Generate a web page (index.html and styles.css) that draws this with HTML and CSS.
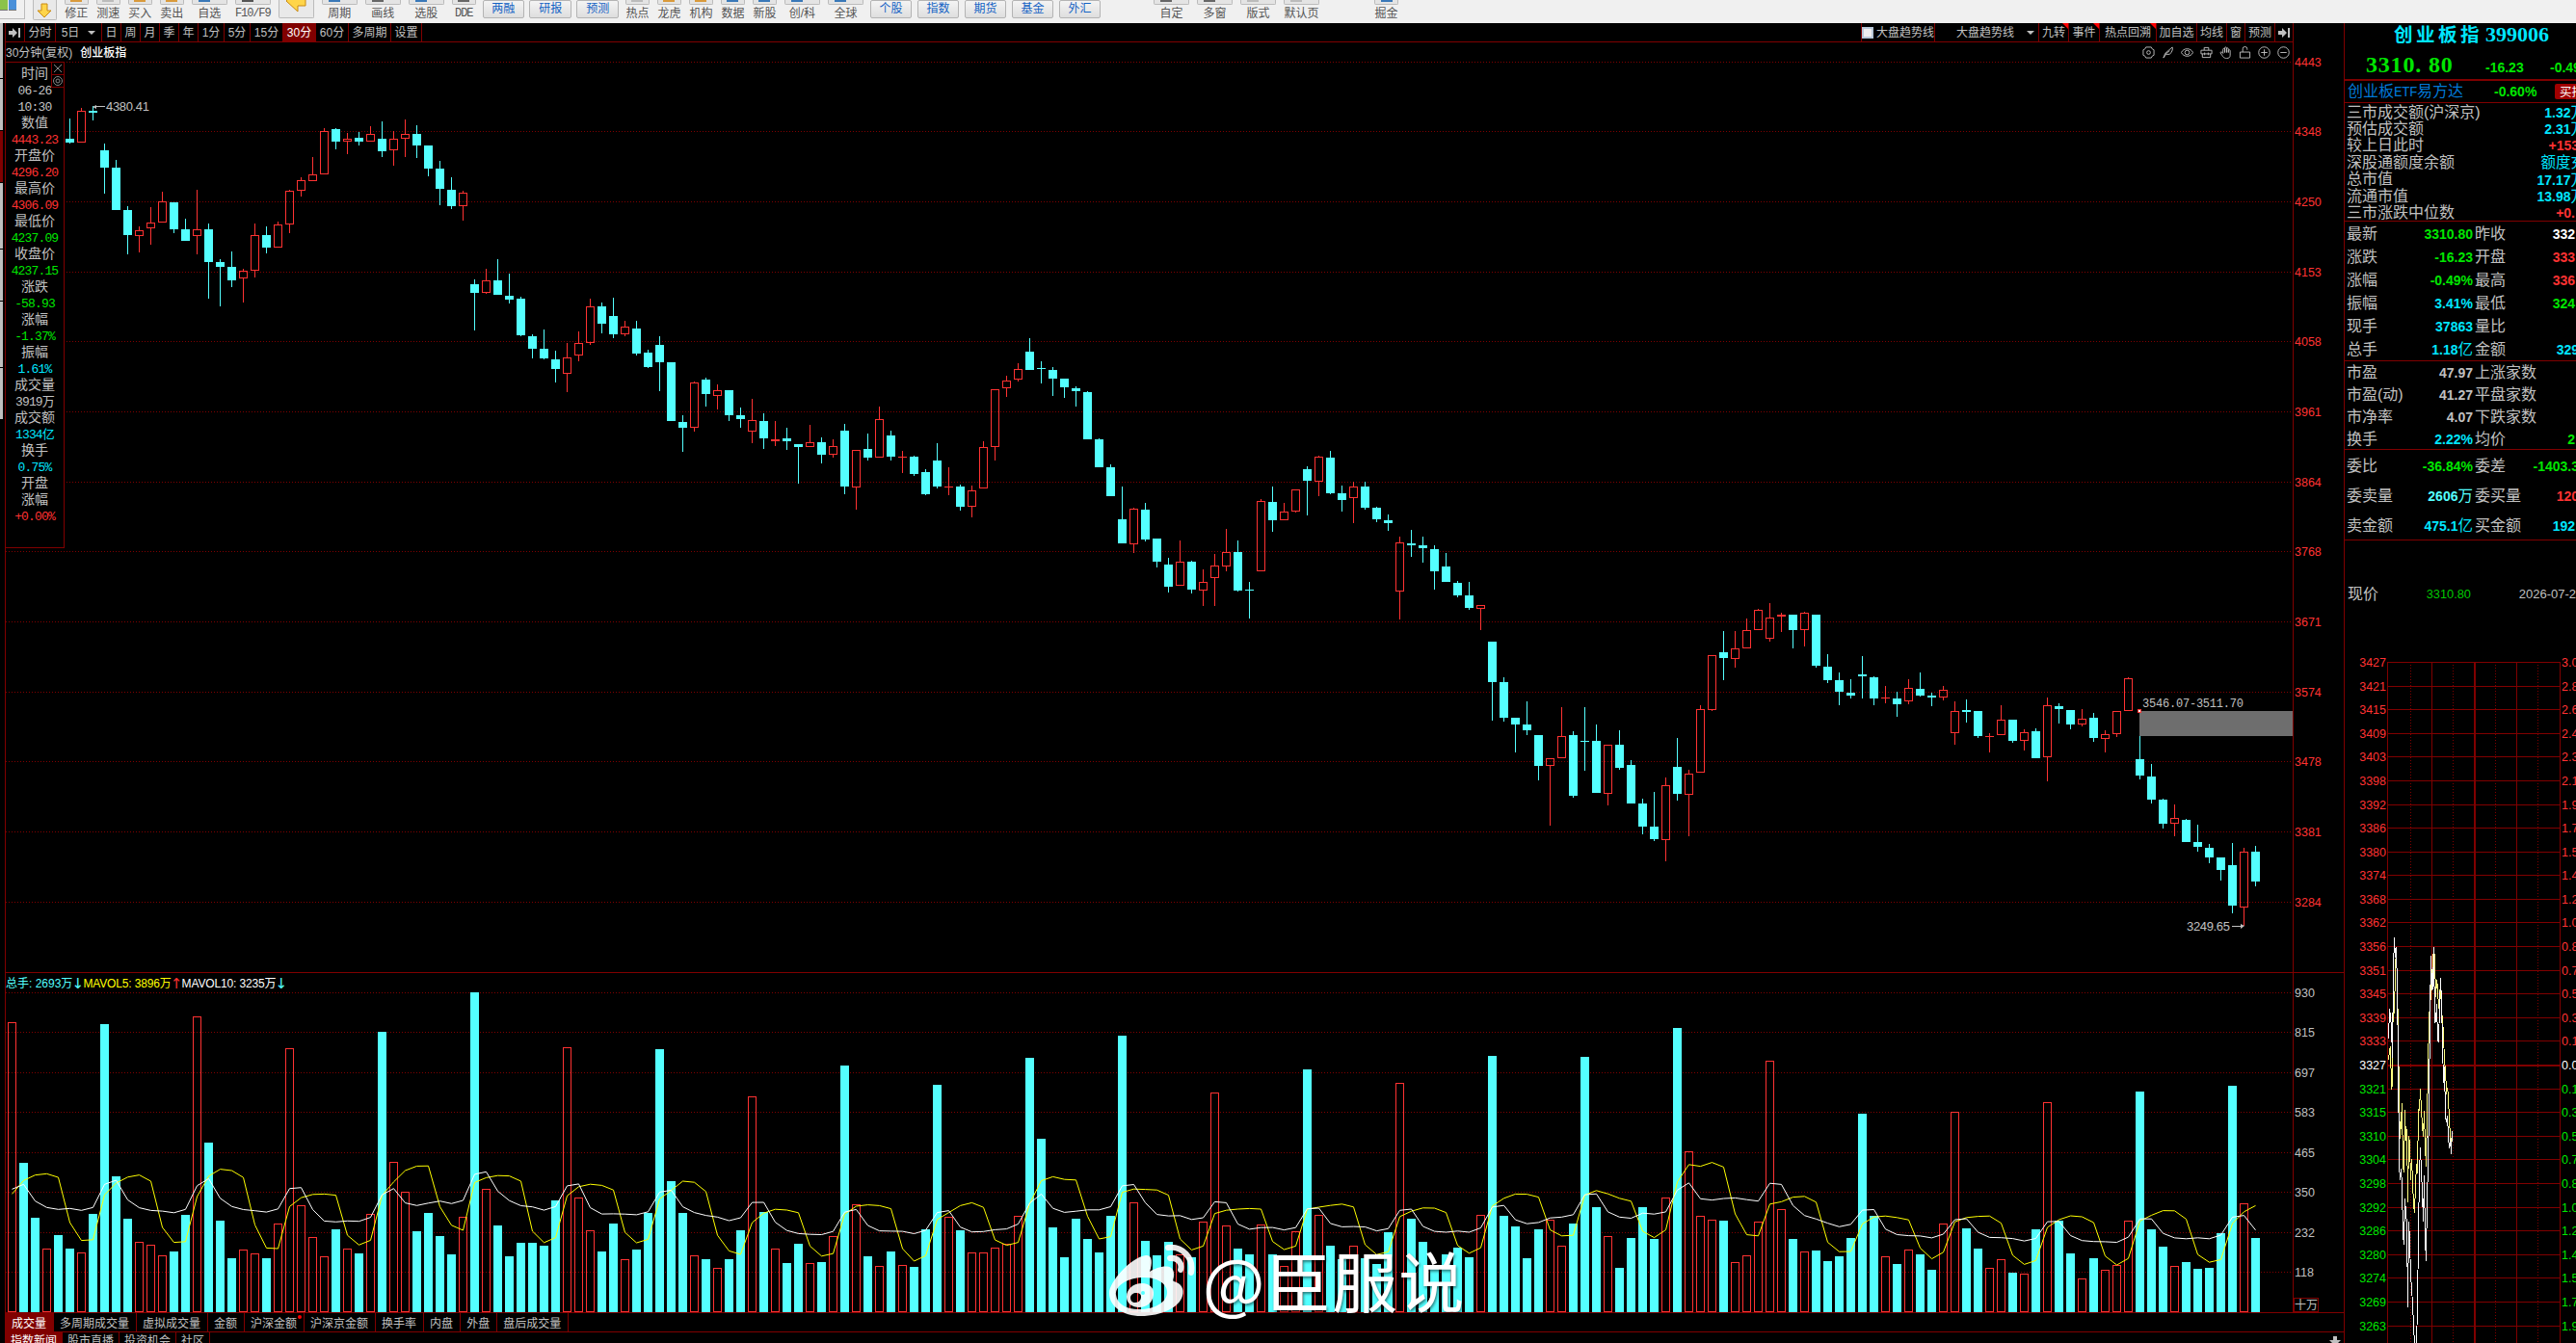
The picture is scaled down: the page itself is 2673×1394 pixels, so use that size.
FILE: index.html
```html
<!DOCTYPE html>
<html lang="zh-CN">
  <head>
    <meta charset="UTF-8" />
    <title>创业板指 399006</title>
    <link rel="stylesheet" href="styles.css">
  </head>
  <body>
    <header class="toolbar">
      <div class="tool win"><i></i><i></i></div>
      <div class="tool boxed down">
        <svg width="16" height="16" viewBox="0 0 16 16"><path d="M5 1h6v7h4l-7 7-7-7h4z" fill="#ffd54a" stroke="#c98a12"/></svg>
      </div>
      <div class="tool orange">修正</div>
      <div class="tool gray">测速</div>
      <div class="tool orange">买入</div>
      <div class="tool orange">卖出</div>
      <div class="tool wide blue">自选</div>
      <div class="tool wide mono">F10/F9</div>
      <div class="tool wide boxed back">
        <svg width="22" height="14" viewBox="0 0 22 14"><path d="M1 1l8-8v5h12v8H13v6z" fill="#ffd54a" stroke="#c98a12"/></svg>
      </div>
      <div class="tool wide blue">周期</div>
      <div class="tool wide dark">画线</div>
      <div class="tool wide blue">选股</div>
      <div class="tool mono dark">DDE</div>
      <div class="buttons">
        <button>两融</button><button>研报</button><button>预测</button>
      </div>
      <div class="tool gray">热点</div>
      <div class="tool orange">龙虎</div>
      <div class="tool orange">机构</div>
      <div class="tool blue">数据</div>
      <div class="tool blue">新股</div>
      <div class="tool wide blue">创/科</div>
      <div class="tool wide blue">全球</div>
      <div class="buttons markets">
        <button>个股</button><button>指数</button><button>期货</button><button>基金</button><button>外汇</button>
      </div>
      <div class="tool wide dark layout-first">自定</div>
      <div class="tool wide dark">多窗</div>
      <div class="tool wide gray">版式</div>
      <div class="tool wide gray">默认页</div>
      <div class="tool blue last">掘金</div>
    </header>

    <div class="desk">
      <div class="gutter"><i></i><i></i><i class="on"></i><i></i><i></i><i></i><i></i></div>

      <main class="workspace">
        <div class="upper">
          <section class="charts">
            <nav class="periods">
              <a class="p-arrow"><svg width="13" height="12" viewBox="0 0 13 12"><path d="M0 4h4V1l5 5-5 5V8H0zM10 1h2v10h-2z" fill="#c0c0c0"/></svg></a>
              <a class="p-two">分时</a>
              <a class="p-drop">5日 <b class="caret"></b></a>
              <a>日</a><a>周</a><a>月</a><a>季</a><a>年</a>
              <a class="p-min">1分</a><a class="p-min">5分</a>
              <a class="p-long">15分</a><a class="p-long active">30分</a><a class="p-long">60分</a>
              <a class="p-multi">多周期</a><a class="p-two">设置</a>
              <span class="spacer"></span>
              <a class="trend-check"><i class="check"></i>大盘趋势线</a>
              <a class="trend">大盘趋势线 <b class="caret"></b></a>
              <a class="r31 flag">九转</a>
              <a class="r32 flag">事件</a>
              <a class="r59 flag">热点回溯</a>
              <a class="r42">加自选</a>
              <a class="r31">均线</a>
              <a class="r19">窗</a>
              <a class="r31">预测</a>
              <a class="r18"><svg width="13" height="12" viewBox="0 0 13 12"><path d="M0 4h4V1l5 5-5 5V8H0zM10 1h2v10h-2z" fill="#c0c0c0"/></svg></a>
            </nav>

            <div class="titlebar">
              <span>30分钟(复权)</span><strong>创业板指</strong>
              <div class="draw-tools">
                <svg viewBox="0 0 14 14"><path d="M4 1h6l1 2 2 1v6l-2 1-1 2H4l-1-2-2-1V4l2-1z"/><circle cx="7" cy="7" r="2"/></svg>
                <svg viewBox="0 0 14 14"><path d="M2 13l2-5 8-7c1 3-1 6-3 8H5zM4 9l5-4"/></svg>
                <svg viewBox="0 0 14 14"><path d="M.5 7C3 1.500 11 1.500 13.500 7 11 12.500 3 12.500.5 7z"/><circle cx="7" cy="7" r="2.500"/></svg>
                <svg viewBox="0 0 14 14"><path d="M1 4.500h12v4H1zM2.500 8.500v4h9v-4M4.500 4.500v-3h5v3M5 7v3M9 7v3"/></svg>
                <svg viewBox="0 0 14 14"><path d="M4 8V3.500a1 1 0 012 0V7 2a1 1 0 012 0v5-4a1 1 0 012 0v4-2a1 1 0 012 0v5c0 2-1 3.500-4 3.500S4 12 1 7c1-1 2-.5 3 1z"/></svg>
                <svg viewBox="0 0 14 14"><path d="M1.500 6.500h11v6.500h-11zM4.500 6.500V3a2.500 2.500 0 015 0v1"/></svg>
                <svg viewBox="0 0 14 14"><circle cx="7" cy="7" r="6.200"/><path d="M3.500 7h7M7 3.500v7"/></svg>
                <svg viewBox="0 0 14 14"><circle cx="7" cy="7" r="6.200"/><path d="M3.500 7h7"/></svg>
              </div>
            </div>

            <div class="kplot">
              <svg id="kline" width="2373" height="945" viewBox="6 64 2373 945"></svg>
              <aside class="info">
                <div class="info-tools">
                  <svg viewBox="0 0 12 12"><path d="M2 2l8 8M10 2l-8 8"/></svg>
                  <svg viewBox="0 0 12 12"><circle cx="6" cy="6" r="4.500"/><circle cx="6" cy="6" r="2"/></svg>
                </div>
                <p>时间</p><p class="num">06-26</p><p class="num">10:30</p>
                <p>数值</p><p class="up">4443.23</p>
                <p>开盘价</p><p class="up">4296.20</p>
                <p>最高价</p><p class="up">4306.09</p>
                <p>最低价</p><p class="down">4237.09</p>
                <p>收盘价</p><p class="down">4237.15</p>
                <p>涨跌</p><p class="down">-58.93</p>
                <p>涨幅</p><p class="down">-1.37%</p>
                <p>振幅</p><p class="cyan">1.61%</p>
                <p>成交量</p><p class="num">3919万</p>
                <p>成交额</p><p class="cyan">1334亿</p>
                <p>换手</p><p class="cyan">0.75%</p>
                <p>开盘</p><p>涨幅</p><p class="up">+0.00%</p>
              </aside>
            </div>

            <div class="legend">
              <span class="vol">总手: 2693万</span><i class="vol">↓</i>
              <span class="ma5">MAVOL5: 3896万</span><i class="up">↑</i>
              <span class="ma10">MAVOL10: 3235万</span><i class="vol">↓</i>
            </div>
            <svg id="volume" width="2373" height="334" viewBox="6 1028 2373 334"></svg>
          </section>

          <section class="axes">
            <svg id="kaxis" width="52" height="985" viewBox="2380 24 52 985"></svg>
            <div class="vaxis">
              <svg id="vaxis" width="52" height="337" viewBox="2380 1010 52 337"></svg>
              <span class="unit">十万</span>
            </div>
          </section>
        </div>

        <nav class="tabs">
          <a class="active">成交量</a><a>多周期成交量</a><a>虚拟成交量</a><a>金额</a><a class="dot">沪深金额</a><a>沪深京金额</a><a>换手率</a><a>内盘</a><a>外盘</a><a>盘后成交量</a>
        </nav>
        <nav class="tabs news">
          <a class="active">指数新闻</a><a>股市直播</a><a>投资机会</a><a>社区</a>
          <svg width="12" height="12" viewBox="0 0 12 12"><path d="M4 0h4v4h4l-6 6-6-6h4z" fill="#c0c0c0"/></svg>
        </nav>
      </main>

      <aside class="quote">
        <h1>创业板指<span>399006</span></h1>
        <div class="price down"><b>3310<i>.</i>80</b><em>-16.23</em><em class="pct">-0.49</em></div>
        <div class="etf"><a>创业板<span>ETF</span>易方达</a><em class="down">-0.60%</em><button>买指</button></div>

        <dl class="market">
          <dt>三市成交额(沪深京)</dt><dd class="cyan over">1.32<u>万</u></dd>
          <dt>预估成交额</dt><dd class="cyan over">2.31<u>万</u></dd>
          <dt>较上日此时</dt><dd class="up nudge">+153</dd>
          <dt>深股通额度余额</dt><dd class="cyan over"><u>额度充</u></dd>
          <dt>总市值</dt><dd class="cyan over">17.17<u>万</u></dd>
          <dt>流通市值</dt><dd class="cyan over">13.98<u>万</u></dd>
          <dt>三市涨跌中位数</dt><dd class="up">+0.</dd>
        </dl>

        <dl class="pairs">
          <dt>最新</dt><dd class="down">3310.80</dd><dt>昨收</dt><dd class="white">332</dd>
          <dt>涨跌</dt><dd class="down">-16.23</dd><dt>开盘</dt><dd class="up">333</dd>
          <dt>涨幅</dt><dd class="down">-0.49%</dd><dt>最高</dt><dd class="up">336</dd>
          <dt>振幅</dt><dd class="cyan">3.41%</dd><dt>最低</dt><dd class="down">324</dd>
          <dt>现手</dt><dd class="cyan">37863</dd><dt>量比</dt><dd></dd>
          <dt>总手</dt><dd class="cyan">1.18<u>亿</u></dd><dt>金额</dt><dd class="cyan nudge">329</dd>
        </dl>

        <dl class="pairs ratios">
          <dt>市盈</dt><dd>47.97</dd><dt>上涨家数</dt><dd></dd>
          <dt>市盈(动)</dt><dd>41.27</dd><dt>平盘家数</dt><dd></dd>
          <dt>市净率</dt><dd>4.07</dd><dt>下跌家数</dt><dd></dd>
          <dt>换手</dt><dd class="cyan">2.22%</dd><dt>均价</dt><dd class="down">2</dd>
        </dl>

        <dl class="pairs orders">
          <dt>委比</dt><dd class="down">-36.84%</dd><dt>委差</dt><dd class="down nudge">-1403.3</dd>
          <dt>委卖量</dt><dd class="aqua">2606<u>万</u></dd><dt>委买量</dt><dd class="up nudge">120</dd>
          <dt>卖金额</dt><dd class="cyan">475.1<u>亿</u></dd><dt>买金额</dt><dd class="cyan">192</dd>
        </dl>

        <div class="now"><span>现价</span><em>3310.80</em><time>2026-07-2</time></div>

        <svg id="intraday" width="240" height="728" viewBox="2433 666 240 728"></svg>
      </aside>
    </div>

    <div class="watermark">
      <svg width="92" height="76" viewBox="0 0 92 76">
        <path fill-rule="evenodd" d="M0 51C0 40 22 14 38 12c7-1 7 8 4 17 9-6 24-9 25 1 1 5-2 8 0 9 8 2 11 8 9 15C73 66 54 75 33 75 14 75 0 65 0 51zM7 53c1 10 12 16 27 15 16-1 27-9 26-19-1-9-12-15-27-14C18 36 6 44 7 53z"/>
        <path fill-rule="evenodd" d="M18 55c0-8 7-14 16-14 8 0 13 5 12 12-1 8-7 13-15 13-7 0-13-4-13-11zM22 56c0 3 2 5 5 5 4 0 6-3 6-6s-2-4-5-4-6 2-6 5zM33 51a2 2 0 104 0 2 2 0 10-4 0z"/>
        <path class="wave" d="M61 4c15-2 27 11 24 26M63 15c8-1 13 5 11 12"/>
      </svg>
      <span>@臣服说</span>
    </div>

    <script src="script.js"></script>
  </body>
</html>
```

FILE: styles.css
```css
* {
  box-sizing: border-box;
}

body {
  margin: 0;
  width: 2673px;
  height: 1394px;
  overflow: hidden;
  position: relative;
  display: flex;
  flex-direction: column;
  background: #000;
  color: #c0c0c0;
  font: 12px/1 "Liberation Sans", "Noto Sans CJK SC", sans-serif;
  white-space: nowrap;
}

svg {
  display: block;
}

.up { color: #ff3232; }
.down { color: #00e600; }
.cyan { color: #00e6ff; }
.aqua { color: #54ffff; }
.white { color: #fff; }

/* top toolbar */
.toolbar {
  height: 24px;
  flex: none;
  display: flex;
  gap: 7.5px;
  background: #f0f0f0;
  color: #555;
}

.tool {
  position: relative;
  width: 25.5px;
  height: 20px;
  padding-top: 8px;
  display: flex;
  justify-content: center;
}

.tool.wide {
  width: 37.5px;
}

/* lower edge of the icon above each caption */
.tool::before {
  content: "";
  position: absolute;
  left: 0;
  right: 0;
  top: 0;
  height: 4px;
  border: 1px solid #bbb;
  border-top: 0;
  border-radius: 0 0 2px 2px;
  background: linear-gradient(currentColor, currentColor) center top / 12px 2px no-repeat #e4e4e4;
}

.tool.wide::before {
  background-position: 6px top;
}

.tool.orange::before { color: #d99a3c; }
.tool.gray::before { color: #bbb; }
.tool.blue::before { color: #3a78b8; }
.tool.dark::before { color: #666; }

.tool.mono {
  font: 12px/12px "Liberation Mono", monospace;
  letter-spacing: -1.1px;
}

.tool.win {
  width: 26px;
  padding: 0;
  justify-content: flex-start;
  gap: 1px;
  border: 1px solid #bbb;
  border-width: 0 1px 1px 0;
}

.tool.win::before,
.tool.boxed::before {
  display: none;
}

.tool.win i {
  width: 8px;
  height: 11px;
  background: #8bc34a;
  border-bottom: 1px solid #777;
}

.tool.win i + i {
  background: #4a90d9;
}

.tool.boxed {
  height: 21px;
  padding: 3px 0 0;
  border: 1px solid #bbb;
  border-top: 0;
  border-radius: 0 0 2px 2px;
  background: #e9e9e9;
}

.tool.back {
  height: 19px;
  padding: 0;
}

.buttons {
  display: flex;
  gap: 5.3px;
  margin: 0 -1px 0 -1px;
}

.buttons button {
  width: 43.7px;
  height: 19px;
  padding: 0 0 1px;
  border: 1px solid #b4b4b4;
  border-radius: 2px;
  background: linear-gradient(#f4f4f4, #dedede);
  color: #1463c4;
  font: inherit;
}

.layout-first { margin-left: 48px; }
.tool.last { margin-left: 49px; }

.desk {
  flex: 1;
  min-height: 0;
  display: flex;
}

/* strip of the docked sidebar */
.gutter {
  width: 5px;
  height: 411px;
  display: flex;
  flex-direction: column;
  gap: 1px;
}

.gutter i {
  width: 3px;
  height: 53px;
  background: #c0c0c0;
}

.gutter i:first-child { height: 57px; }
.gutter i:nth-child(4) { height: 68px; }
.gutter i:nth-child(6) { height: 68px; }
.gutter i.on { background: #800000; }

.workspace {
  width: 2428px;
  flex: none;
  border: 1px solid #800000;
  border-width: 0 1px;
}

.upper {
  display: flex;
  height: 1339px;
  border-bottom: 1px solid #800000;
}

.charts {
  width: 2374px;
  border-right: 1px solid #800000;
}

.periods {
  height: 20px;
  display: flex;
  border-bottom: 1px solid #800000;
}

.periods a {
  position: relative;
  width: 20px;
  padding-top: 1px;
  display: flex;
  align-items: center;
  justify-content: center;
  border-right: 1px solid #800000;
}

.periods .p-two { width: 32px; }
.periods .p-drop { width: 48px; gap: 9px; }
.periods .p-min { width: 27px; }
.periods .p-long { width: 34px; }
.periods .p-multi { width: 44px; }
.periods .active { background: #800000; color: #fff; }
.periods .spacer { flex: 1; border-right: 1px solid #800000; }
.periods .trend-check { width: 76px; gap: 3px; }
.periods .trend { width: 108px; gap: 13px; padding-left: 18px; }
.periods .r18 { width: 18px; border: 0; }
.periods .r19 { width: 19px; }
.periods .r31 { width: 31px; }
.periods .r32 { width: 32px; }
.periods .r59 { width: 59px; }
.periods .r42 { width: 42px; }

.flag::after {
  content: "";
  position: absolute;
  top: 0;
  right: 0;
  border-top: 6px solid #f00;
  border-left: 6px solid transparent;
}

.caret {
  border: 4px solid transparent;
  border-top-color: #c0c0c0;
  border-bottom: 0;
}

.check {
  width: 12px;
  height: 12px;
  border: 2px solid #b8c8d8;
  background: #eee;
}

.titlebar {
  height: 20px;
  padding-top: 1px;
  display: flex;
  align-items: center;
  gap: 8px;
}

.titlebar strong {
  color: #fff;
  font-weight: 500;
}

.draw-tools {
  display: flex;
  gap: 7px;
  margin: 0 3px 0 auto;
}

.draw-tools svg {
  width: 13px;
  height: 13px;
  fill: none;
  stroke: #c0c0c0;
}

.kplot {
  position: relative;
  height: 946px;
  border-bottom: 1px solid #800000;
}

/* floating cursor data box */
.info {
  position: absolute;
  left: -1px;
  top: 0;
  width: 62px;
  height: 505px;
  padding-top: 4px;
  border: 1px solid #800000;
  background: #000;
  text-align: center;
  font: 13px/17px "Liberation Mono", "Noto Sans CJK SC", monospace;
}

.info p {
  height: 17px;
  margin: 0;
  letter-spacing: -0.85px;
}

.info p:not([class]) {
  font-size: 14px;
  letter-spacing: 0;
}

.info-tools {
  position: absolute;
  top: -1px;
  right: -1px;
  width: 14px;
}

.info-tools svg {
  width: 14px;
  height: 14px;
  margin-bottom: -1px;
  border: 1px solid #800000;
  fill: none;
  stroke: #888;
}

.legend {
  height: 18px;
  display: flex;
  align-items: center;
  padding-top: 4px;
}

.legend i {
  width: 11px;
  font: 15px/12px "DejaVu Sans", sans-serif;
  display: flex;
  justify-content: center;
}

.legend .vol { color: #54ffff; }
.legend .ma5 { color: #ff0; letter-spacing: -0.15px; }
.legend .ma10 { color: #fff; letter-spacing: -0.15px; }

.axes {
  width: 52px;
}

.vaxis {
  border-top: 1px solid #800000;
}

.unit {
  display: block;
  width: 26px;
  height: 15px;
  border: 1px solid #800000;
  line-height: 14px;
  text-align: center;
}

.tabs {
  display: flex;
  height: 20px;
  border-bottom: 1px solid #800000;
}

.tabs a {
  position: relative;
  padding: 0 7px 0 6px;
  line-height: 22px;
  border-right: 1px solid #800000;
}

.tabs .active {
  background: #800000;
  color: #fff;
}

.tabs .dot::after {
  content: "";
  position: absolute;
  top: 2px;
  right: 2px;
  width: 4px;
  height: 4px;
  border-radius: 50%;
  background: #f00;
}

.tabs.news {
  height: 11px;
  overflow: hidden;
  border: 0;
}

.tabs.news a {
  padding: 0 5px;
  line-height: 18px;
}

.tabs.news svg {
  margin: 4px 3px 0 auto;
}

/* right quote panel */
.quote {
  flex: 1;
  overflow: hidden;
  font-size: 16px;
}

.quote h1 {
  height: 25px;
  margin: 0;
  padding-left: 51px;
  color: #00e6ff;
  font: bold 19.5px/24px "Liberation Serif", "Noto Sans CJK SC", serif;
  letter-spacing: 3.5px;
}

.quote h1 span {
  margin-left: 3px;
  font-size: 22px;
  letter-spacing: 0;
}

.quote em,
.quote dd {
  flex: none;
  font: bold 14px/1 "Liberation Sans", "Noto Sans CJK SC", sans-serif;
}

.price {
  height: 35px;
  display: flex;
  padding-left: 22px;
  border-bottom: 2px solid #800000;
}

.price b {
  flex: none;
  width: 92px;
  font: bold 24px/37px "Liberation Serif", serif;
  letter-spacing: 0.8px;
}

.price b i {
  margin-right: 7px;
  font-style: normal;
}

.price em {
  width: 67px;
  padding-left: 1px;
  margin-left: 31px;
  line-height: 43px;
}

.price .pct {
  margin-left: 0;
}

.etf {
  height: 23px;
  display: flex;
  align-items: center;
  padding-left: 3px;
  border-bottom: 1px solid #800000;
}

.etf a {
  flex: none;
  width: 152px;
  color: #0078d7;
}

.etf a span {
  font: 14.5px "Liberation Mono", monospace;
  letter-spacing: -0.7px;
}

.etf em {
  width: 63px;
}

.etf button {
  width: 40px;
  flex: none;
  height: 16px;
  padding: 0 0 0 5px;
  border: 0;
  border-radius: 2px;
  background: #a00000;
  color: #fff;
  font: 12.500px/16px "Noto Sans CJK SC", sans-serif;
  text-align: left;
}

.quote dl {
  display: grid;
  margin: 0;
  padding-top: 1px;
  align-items: center;
  border-bottom: 1px solid #800000;
}

.quote dt {
  padding-left: 2px;
}

.quote dd {
  margin: 0 1px 0 0;
  text-align: right;
}

.quote dd.over { margin-right: -10px; }
.quote dd.nudge { margin-right: -3px; }

.quote u {
  font-size: 15.5px;
  font-weight: 400;
  text-decoration: none;
}

.market {
  grid-template-columns: 1fr auto;
  grid-auto-rows: 17.4px;
  height: 123px;
}

.pairs {
  grid-template-columns: 62px 71px 66px 41px;
  grid-auto-rows: 24px;
  height: 145px;
}

.pairs dd {
  justify-self: end;
}

.pairs dd:nth-of-type(odd) {
  margin-right: 0;
}

.ratios {
  grid-auto-rows: 22.8px;
  height: 92px;
}

.orders {
  grid-auto-rows: 31px;
  height: 94px;
}

.now {
  display: flex;
  align-items: center;
  height: 106px;
  padding: 5px 0 0 3px;
}

.now span { width: 84px; }
.now em { width: 96px; color: #00c800; font: 12.8px "Liberation Sans", sans-serif; }
.now time { font-size: 13px; }

/* chart pieces */
.grid { stroke: #800000; stroke-dasharray: 1 2; }
.line { stroke: #800000; }
.thick { stroke: #800000; stroke-width: 2; }
.fall { fill: #54ffff; }
.rise { fill: none; stroke: #ff3232; }
.rise-wick { fill: #ff3232; }
.avg5 { fill: none; stroke: #ff0; }
.avg10 { fill: none; stroke: #fff; }
.trace { fill: none; stroke: #fff; }
.trace-avg { fill: none; stroke: #ffff80; }
.gap { fill: #6e6e6e; }
.note { fill: #c0c0c0; font-size: 13px; }
.note-mono { fill: #c0c0c0; font: 12px "Liberation Mono", monospace; }
.tick { font-size: 12.500px; }
.tick-up { fill: #ff3232; }
.tick-down { fill: #00e600; }
.tick-flat { fill: #fff; }
.tick-vol { fill: #c0c0c0; }
.end { text-anchor: end; }

/* account mark over the volume chart */
.watermark {
  position: absolute;
  left: 1151px;
  top: 1291px;
  display: flex;
  color: #fff;
  font: 68px/80px "Noto Sans CJK SC", sans-serif;
  letter-spacing: 1px;
  text-shadow: 1px 2px 3px rgba(0, 0, 0, 0.5);
}

.watermark span {
  margin: -3px 0 0 5px;
}

.watermark svg {
  fill: #fff;
  opacity: 0.9;
}

.watermark .wave {
  fill: none;
  stroke: #fff;
  stroke-width: 6;
  stroke-linecap: round;
}
```

FILE: script.js
```js
// Candles: direction, high, body top, body bottom, low (first one is bar 5)
const candles = `c 123 144 148 149,r 112 115 148 148,c 110 115 117 125,c 149 156 174 201,c 166 174 218 218,
c 214 218 244 264,r 235 239 245 262,r 215 231 237 254,r 199 209 231 231,c 210 210 238 242,c 227 238 250 250,
r 197 238 245 264,c 232 238 272 310,c 269 272 277 318,c 261 277 291 298,r 279 281 289 314,r 232 244 281 288,
c 235 244 257 263,r 230 233 257 257,r 197 198 233 242,r 184 187 198 204,r 163 181 188 188,r 133 136 181 181,
c 133 134 147 155,r 138 144 147 160,c 137 143 147 151,r 131 139 147 147,c 126 144 157 163,r 136 144 156 172,
r 124 139 144 163,c 130 139 151 164,c 151 151 175 183,c 167 175 196 213,c 184 197 214 217,r 198 200 214 229,
c 290 295 304 343,r 279 291 304 305,c 269 291 306 306,c 284 307 311 315,c 308 310 348 349,c 347 349 362 372,
c 342 362 372 373,c 364 373 383 397,r 356 371 388 407,r 344 356 369 375,r 310 318 356 358,c 314 318 336 346,
c 309 328 347 351,r 333 339 347 349,c 333 341 367 369,c 363 366 381 382,c 349 358 376 406,c 376 376 437 437,
c 431 438 444 469,r 396 397 444 448,c 392 394 409 422,r 399 405 411 425,c 405 405 431 437,c 423 431 435 444,
r 414 436 448 460,c 429 437 455 466,r 437 456 458 463,c 444 455 458 467,c 461 461 464 502,r 441 459 464 464,
c 454 459 472 481,r 456 463 472 475,c 440 447 505 513,r 467 467 506 529,c 450 466 475 478,r 422 435 475 475,
c 447 452 474 478,r 468 474 475 491,c 473 474 492 494,c 487 490 513 514,c 460 478 505 507,r 485 505 506 514,
c 503 505 526 530,r 504 509 526 537,r 458 464 507 507,r 404 404 464 478,r 390 395 403 412,r 377 383 394 396,
c 351 365 384 384,c 375 382 383 398,c 381 384 393 411,c 393 393 402 413,c 401 403 406 422,c 406 407 456 456,
c 455 456 485 485,c 482 485 515 515,c 505 539 564 564,r 527 528 565 574,c 522 529 560 562,c 559 559 583 589,
c 579 586 609 615,r 561 583 608 608,c 582 583 612 616,r 591 604 613 629,r 575 587 600 629,r 549 573 588 593,
c 561 573 613 614,c 604 612 613 642,r 518 520 593 593,c 505 521 540 552,r 522 531 540 540,r 508 508 531 532,
c 484 487 499 535,r 473 474 500 515,c 468 475 512 513,c 504 512 519 531,r 500 505 517 543,c 500 505 527 529,
c 526 527 539 542,c 534 540 543 551,r 557 563 614 643,c 550 564 566 578,c 557 566 569 584,c 566 570 593 612,
c 574 588 604 604,c 603 605 618 620,c 604 618 631 633,r 628 628 632 654,c 666 666 708 748,c 703 708 745 749,
c 745 745 752 781,c 728 752 758 763,c 763 763 795 810,r 787 787 795 857,r 734 764 787 787,c 759 763 826 828,
c 734 769 770 800,c 752 769 823 823,r 773 773 824 836,c 758 773 797 799,c 789 794 834 834,c 829 834 858 866,
c 822 858 871 873,r 807 815 872 894,c 766 796 824 831,r 799 803 825 868,r 732 736 802 802,r 680 680 737 738,
c 655 677 683 706,r 655 673 684 693,r 642 654 673 673,r 632 633 654 654,r 626 641 663 666,r 636 638 640 656,
c 638 638 654 673,r 635 636 654 671,c 638 638 691 693,c 679 692 706 709,c 698 706 718 732,c 705 719 722 725,
c 681 700 702 725,c 702 703 725 732,r 712 724 725 730,c 718 725 731 744,r 705 714 728 731,c 698 715 722 723,
c 719 722 724 733,r 712 716 724 727,r 728 738 761 773,c 726 737 739 750,c 738 738 764 766,r 761 764 765 781,
r 732 747 763 763,c 747 747 769 771,r 757 760 769 779,c 756 759 787 787,r 724 732 786 811,c 730 733 736 751,
c 737 737 752 757,r 736 746 752 754,c 740 745 766 770,r 758 762 767 781,r 738 738 762 765,r 703 704 738 738,
c 764 788 805 809,c 793 806 830 834,c 829 830 855 860,r 835 849 855 868,c 850 851 874 874,c 856 874 879 884,
c 876 880 890 896,c 890 890 903 914,c 875 898 940 948,r 880 884 942 961,c 878 884 915 920`
  .split(",")
  .map((s) => s.trim().split(" "));

// Distance of each volume bar's top from the top of the pane, in thirds of a pixel
const volumes = [
  184, 621, 792, 888, 846, 888, 900, 780, 189, 663, 795, 867, 876, 909, 897, 783, 165, 558, 801, 918,
  891, 903, 918, 810, 264, 753, 852, 912, 828, 888, 903, 780, 213, 618, 711, 834, 777, 849, 906, 789,
  90, 702, 816, 912, 870, 870, 879, 738, 261, 729, 831, 897, 810, 921, 891, 777, 267, 678, 777, 909,
  921, 948, 921, 831, 414, 774, 888, 933, 873, 933, 930, 849, 318, 750, 912, 942, 897, 939, 945, 828,
  378, 789, 831, 900, 900, 885, 873, 786, 294, 546, 822, 915, 795, 858, 900, 786, 225, 744, 864, 909,
  867, 906, 915, 804, 402, 816, 888, 906, 813, 906, 942, 834, 330, 783, 879, 921, 879, 918, 936, 837,
  372, 795, 867, 939, 906, 885, 915, 783, 288, 786, 819, 918, 828, 798, 879, 810, 291, 759, 849, 948,
  855, 759, 858, 729, 201, 585, 786, 798, 801, 930, 909, 804, 303, 765, 858, 897, 894, 927, 912, 855,
  468, 786, 912, 936, 891, 906, 954, 810, 462, 825, 888, 948, 921, 963, 966, 828, 432, 801, 903, 981,
  918, 954, 939, 801, 399, 828, 882, 942, 930, 951, 948, 840, 381, 747, 855,
];
const hiddenDirs = ["r", "c", "c", "r", "c"];

const NS = "http://www.w3.org/2000/svg";

function add(parent, tag, attrs, text) {
  const el = document.createElementNS(NS, tag);
  for (const key in attrs) el.setAttribute(key, attrs[key]);
  if (text !== undefined) el.textContent = text;
  parent.appendChild(el);
  return el;
}

function rect(parent, cls, x, y, width, height) {
  add(parent, "rect", { class: cls, x, y, width, height, "shape-rendering": "crispEdges" });
}

function body(parent, dir, x, top, bottom) {
  if (dir === "c") {
    rect(parent, "fall", x, top, 9, Math.max(1, bottom - top));
  } else if (bottom - top < 3) {
    rect(parent, "rise-wick", x, top, 9, Math.max(1, bottom - top));
  } else {
    rect(parent, "rise", x + 0.5, top + 0.5, 8, bottom - top - 1);
  }
}

function hline(parent, cls, y, x1, x2) {
  add(parent, "line", { class: cls, x1, x2, y1: y + 0.5, y2: y + 0.5, "shape-rendering": "crispEdges" });
}

function vline(parent, cls, x, y1, y2) {
  add(parent, "line", { class: cls, x1: x + 0.5, x2: x + 0.5, y1, y2, "shape-rendering": "crispEdges" });
}

// Price chart
const kline = document.getElementById("kline");
const kaxis = document.getElementById("kaxis");
const prices = [4443, 4348, 4250, 4153, 4058, 3961, 3864, 3768, 3671, 3574, 3478, 3381, 3284];
const priceRows = [64, 136, 209, 282, 354, 427, 500, 572, 645, 718, 790, 863, 936];
priceRows.forEach((y, n) => {
  hline(kline, "grid", y, 6, 2379);
  add(kaxis, "text", { class: "tick tick-up", x: 2381, y: y + 5 }, prices[n]);
});

candles.forEach(([dir, ...nums], n) => {
  const [high, top, bottom, low] = nums.map(Number);
  const x = 8 + 12 * (n + 5);
  const wick = dir === "c" ? "fall" : "rise-wick";
  if (top > high) rect(kline, wick, x + 4, high, 1, top - high);
  if (low > bottom) rect(kline, wick, x + 4, bottom, 1, low - bottom);
  body(kline, dir, x, top, bottom);
});

rect(kline, "gap", 2220, 738, 159, 26);
rect(kline, "rise-wick", 2218, 736, 4, 4);
rect(kline, "tick-flat", 2219, 737, 2, 2);
add(kline, "text", { class: "note-mono", x: 2223, y: 734, textLength: 105 }, "3546.07-3511.70");
add(kline, "text", { class: "note", x: 110, y: 115, textLength: 45 }, "4380.41");
add(kline, "text", { class: "note", x: 2269, y: 966, textLength: 45 }, "3249.65");
add(kline, "path", { d: "M96 111l4-2v1h9v1h-9v2z", fill: "#c0c0c0" });
add(kline, "path", { d: "M2329 961l-4-2v2h-9v1h9v2z", fill: "#c0c0c0" });

// Volume chart
const volume = document.getElementById("volume");
const vaxis = document.getElementById("vaxis");
const volLabels = [930, 815, 697, 583, 465, 350, 232, 118];
[1030, 1071, 1113, 1154, 1196, 1237, 1279, 1320].forEach((y, n) => {
  hline(volume, "grid", y, 6, 2379);
  add(vaxis, "text", { class: "tick tick-vol", x: 2381, y: y + 5 }, volLabels[n]);
});

volumes.forEach((v, n) => {
  const dir = n < 5 ? hiddenDirs[n] : candles[n - 5][0];
  body(volume, dir, 8 + 12 * n, 1000 + Math.round(v / 3), 1362);
});

// Moving average; the first points come from bars left of the screen
function average(period, start) {
  return volumes
    .map((v, n) => {
      let avg = start[n];
      if (n >= period - 1) {
        avg = volumes.slice(n - period + 1, n + 1).reduce((a, b) => a + b) / period;
      }
      return `${12.5 + 12 * n},${1000 + avg / 3}`;
    })
    .join(" ");
}
add(volume, "polyline", { class: "avg5", points: average(5, [718, 676, 659, 655]) });
add(volume, "polyline", { class: "avg10", points: average(10, [703, 688, 740, 760, 766, 763, 769, 760, 688]) });

// Intraday chart
const intraday = document.getElementById("intraday");
const dayPrices = [3427, 3421, 3415, 3409, 3403, 3398, 3392, 3386, 3380, 3374, 3368, 3362, 3356, 3351, 3345,
  3339, 3333, 3327, 3321, 3315, 3310, 3304, 3298, 3292, 3286, 3280, 3274, 3269, 3263];
const dayPercents = ["3.0", "2.8", "2.6", "2.4", "2.3", "2.1", "1.9", "1.7", "1.5", "1.4", "1.2", "1.0", "0.8",
  "0.7", "0.5", "0.3", "0.1", "0.0", "0.1", "0.3", "0.5", "0.7", "0.8", "1.0", "1.2", "1.4", "1.5", "1.7", "1.9"];
dayPrices.forEach((price, n) => {
  const y = Math.round(686 + 24.59 * n);
  const cls = n < 17 ? "tick-up" : n === 17 ? "tick-flat" : "tick-down";
  hline(intraday, n === 17 ? "thick" : "line", y, 2477, 2657);
  add(intraday, "text", { class: `tick end ${cls}`, x: 2476, y: y + 5 }, price);
  add(intraday, "text", { class: `tick ${cls}`, x: 2658, y: y + 5 }, dayPercents[n]);
});
[2477, 2523, 2611, 2656].forEach((x) => vline(intraday, "line", x, 686, 1394));
[2501, 2545, 2589, 2633].forEach((x) => vline(intraday, "grid", x, 686, 1394));
vline(intraday, "thick", 2567.5, 686, 1394);

// One value every pixel, starting at x = 2478
const avgTrace = [955, 935, 925, 1020, 1005, 755, 855, 760, 712, 800, 885, 1050, 1125, 1085, 1048, 1185, 1198,
  1062, 1130, 1105, 1262, 1120, 1135, 1215, 1170, 1215, 1270, 1285, 1225, 1180, 1200, 1060, 1065, 1018, 1065,
  1095, 1122, 1065, 1140, 1185, 1065, 990, 850, 860, 795, 780, 740, 712, 740, 820, 782, 800, 845, 805, 800, 845,
  870, 895, 965, 970, 1030, 1015, 1030, 1090, 1115, 1140, 1108];
const trace = [908, 845, 860, 885, 950, 760, 690, 735, 712, 800, 955, 1180, 1215, 1190, 1225, 1330, 1355, 1255,
  1285, 1310, 1490, 1305, 1345, 1420, 1450, 1480, 1530, 1568, 1568, 1568, 1490, 1330, 1200, 1145, 1195, 1240,
  1305, 1205, 1340, 1390, 1250, 1190, 1050, 860, 730, 805, 800, 712, 875, 870, 835, 910, 918, 840, 778, 830, 920,
  1005, 970, 1075, 1090, 1075, 1120, 1145, 1125, 1158, 1108];
const toPoints = (list) => list.map((v, n) => `${2478.5 + n},${640 + v / 2.08}`).join(" ");
add(intraday, "polyline", { class: "trace-avg", "shape-rendering": "crispEdges", points: toPoints(avgTrace) });
add(intraday, "polyline", { class: "trace", "shape-rendering": "crispEdges", points: toPoints(trace) });
```
